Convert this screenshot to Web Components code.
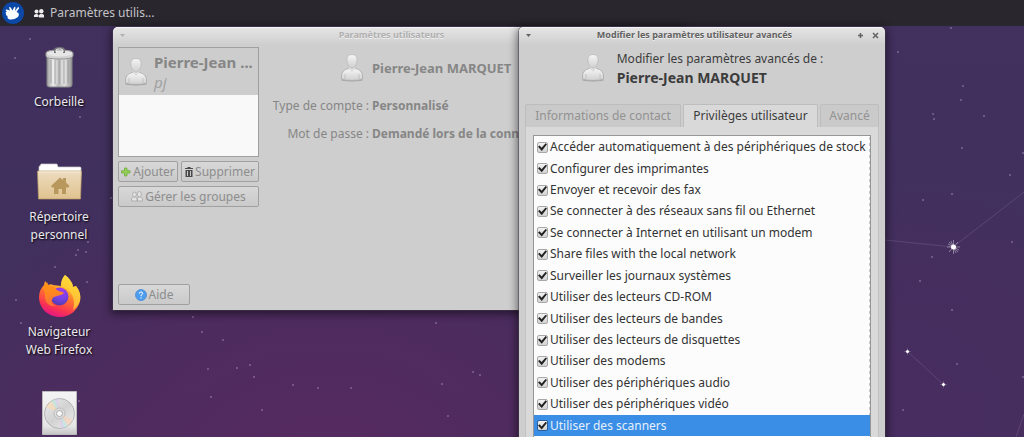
<!DOCTYPE html>
<html lang="fr">
<head>
<meta charset="utf-8">
<meta name="viewport" content="width=device-width, initial-scale=1">
<title>Paramètres utilisateurs</title>
<style>
  html, body { height: 100%; }
  body {
    margin: 0;
    overflow: hidden;
    font-family: "Noto Sans", "Open Sans", sans-serif;
    font-size: 12px;
    line-height: 18px;
    color: #3c3c3c;
  }
</style>
</head>
<body>
<desk-top>
  <top-panel slot="panel">Paramètres utilis...</top-panel>
  <desk-icon name="trash">Corbeille</desk-icon>
  <desk-icon name="home">Répertoire personnel</desk-icon>
  <desk-icon name="firefox">Navigateur Web Firefox</desk-icon>
  <desk-icon name="disc"></desk-icon>

  <app-window slot="windows" class="users" label="Paramètres utilisateurs" inactive>
    <users-settings></users-settings>
  </app-window>
  <app-window slot="windows" class="advanced" label="Modifier les paramètres utilisateur avancés">
    <advanced-settings></advanced-settings>
  </app-window>
</desk-top>

<script>
const icons = {
  trash: `<svg width="48" height="48" viewBox="0 0 48 48">
    <defs><linearGradient id="t"><stop offset="0" stop-color="#9d9d9d"/><stop offset=".25" stop-color="#ededed"/><stop offset=".45" stop-color="#b9b9b9"/><stop offset=".7" stop-color="#dedede"/><stop offset="1" stop-color="#959595"/></linearGradient></defs>
    <path d="M12 12h25v30q0 2-3 2H15q-3 0-3-2z" fill="url(#t)" stroke="#888"/>
    <path d="M16 17v23M20 17v24M24.500 17v24M29 17v24M33 17v23" stroke="#888" stroke-opacity=".4" stroke-width="1.500"/>
    <path d="M18 17v23M22 17v24M27 17v24M31 17v24" stroke="#fff" stroke-opacity=".4"/>
    <path d="M11 10q0-3 13.500-3T38 10v3q0 3-13.500 3T11 13z" fill="#d2d2d2" stroke="#959595"/>
    <ellipse cx="24.500" cy="10.500" rx="12.500" ry="3" fill="#e6e6e6"/>
    <path d="M20 10V7q0-2 4.500-2T29 7v3" fill="none" stroke="#777" stroke-width="2"/>
    <path d="M21 9V7q0-1 3.500-1T28 7v2" fill="none" stroke="#f4f4f4"/></svg>`,
  home: `<svg width="48" height="48" viewBox="0 0 48 48">
    <defs><linearGradient id="h" x2="0" y2="1"><stop stop-color="#eddcc0"/><stop offset="1" stop-color="#e0c28e"/></linearGradient></defs>
    <path d="M4 18V9q0-1 1-1l1-2h16l1 3h22q1 0 1 1v8z" fill="#fff" stroke="#ccc" stroke-width=".7"/>
    <path d="M2.500 13h44L45.500 41h-42z" fill="url(#h)" stroke="#b89864" stroke-opacity=".7"/>
    <path d="M3.500 14h42" stroke="#f8eedc"/>
    <path d="M25 19.500L16 28l1 1.500h2V36h4.500v-5h3.500v5h4v-6.500h2.500L34.500 28 31 24.500V20h-3v2z" fill="#b8985c"/></svg>`,
  firefox: `<svg width="48" height="48" viewBox="0 0 48 48">
    <defs>
      <linearGradient id="f" x1=".75" x2=".35" y2="1"><stop stop-color="#fff44f"/><stop offset=".28" stop-color="#ffb82b"/><stop offset=".55" stop-color="#ff6c32"/><stop offset=".8" stop-color="#fb3352"/><stop offset="1" stop-color="#e31587"/></linearGradient>
      <radialGradient id="p" cx=".6" cy=".2" r=".9"><stop stop-color="#a33bec"/><stop offset=".5" stop-color="#7542e5"/><stop offset="1" stop-color="#4b3a9d"/></radialGradient>
      <linearGradient id="y" x2="0" y2="1"><stop stop-color="#ff980e"/><stop offset="1" stop-color="#ff7139"/></linearGradient>
    </defs>
    <path d="M30 2c4 3 8 8 8 12l3-1c4 5 5 10 4 15-2 9-10 16-20 16C13 44 4 35 4 24c0-5 2-9 5-12l1-4 3 4c2-1 4-1 5 0l8 1c0-4 1-8 4-11z" fill="url(#f)"/>
    <circle cx="24.500" cy="23.500" r="9" fill="url(#p)"/>
    <path d="M8 15l4-6 2 5c3-1 5-1 7 2 2 3 6 2 8 4-2 2-5 2-7 3-1 1-3 0-4 2-3 3-1 7 3 8-6 1-11-3-11-9 0-3 0-6-2-9z" fill="url(#y)"/>
    <path d="M30 2c4 3 8 8 8 12l3-1c4 5 5 10 4 15-2 5-4 7-7 9 2-7 1-14-4-19-3-3-7-4-8-5 0-4 1-8 4-11z" fill="#ffd43a" fill-opacity=".75"/></svg>`,
  disc: `<svg width="48" height="48" viewBox="0 0 48 48">
    <defs>
      <linearGradient id="c" x2="0" y2="1"><stop stop-color="#f4f4f4"/><stop offset=".8" stop-color="#e6e6e6"/><stop offset="1" stop-color="#c4c4c4"/></linearGradient>
      <linearGradient id="r" y2="1"><stop stop-color="#ececec"/><stop offset=".5" stop-color="#d2d2d2"/><stop offset="1" stop-color="#eee"/></linearGradient>
    </defs>
    <path d="M7.500 3.500h34v43h-34z" fill="url(#c)" stroke="#bbb"/>
    <circle cx="24.500" cy="25.500" r="15" fill="url(#r)" stroke="#b5b5b5"/>
    <g fill-opacity=".55">
      <path d="M24.500 25.500L11 19l5-6z" fill="#ffd9a8"/><path d="M24.500 25.500L16 13l4-2z" fill="#b8e8d8"/><path d="M24.500 25.500L20 11l3-.5z" fill="#dcc4f4"/>
      <path d="M24.500 25.500L38 32l-5 6z" fill="#ffd0b0"/><path d="M24.500 25.500L33 38l-4 2z" fill="#b8e8e0"/><path d="M24.500 25.500L29 40l-3 .5z" fill="#dcc4f4"/>
    </g>
    <circle cx="24.500" cy="25.500" r="5.500" fill="#ddd" stroke="#b5b5b5" stroke-width=".8"/><circle cx="24.500" cy="25.500" r="3" fill="#f8f8f8" stroke="#aaa"/></svg>`,
  face: `<svg width="24" height="30" viewBox="0 0 24 30">
    <defs><linearGradient id="b" x2="0" y2="1"><stop stop-color="#f6f6f6"/><stop offset="1" stop-color="#cfcfcf"/></linearGradient></defs>
    <ellipse cx="12" cy="27" rx="11" ry="1.500" fill="#777" fill-opacity=".5"/>
    <path d="M1.500 23q0-6 7-7.500h7q7 1.500 7 7.500v3q-3 1.500-10.500 1.500T1.500 26z" fill="url(#b)" stroke="#a8a8a8" stroke-width=".8"/>
    <path d="M5 21v5M19 21v5" stroke="#bdbdbd" stroke-width=".8"/>
    <path d="M9 13v3l3 3 3-3v-3z" fill="#dedede"/>
    <path d="M12 1.500c-4 0-5.500 3-5 6.500s2 7 5 7 4.500-3.500 5-7-1-6.500-5-6.500z" fill="url(#b)" stroke="#bababa" stroke-width=".8"/></svg>`,
  add: `<svg width="10" height="10" viewBox="0 0 10 10"><path d="M3.500 1h2.500v2.700h3V6H6v3H3.500V6h-3V3.700h3z" fill="#96cf58" stroke="#6fae3c" stroke-width=".8"/></svg>`,
  del: `<svg width="8" height="10" viewBox="0 0 8 10"><path d="M0 2V1h2.500V0h3v1H8v1zM.5 3h7v7h-7z" fill="#4a4a4a"/><path d="M2.500 4v5M5.500 4v5" stroke="#c8c8c8"/></svg>`,
  group: `<svg width="12" height="11" viewBox="0 0 12 11"><g fill="#e4e4e4" stroke="#a4a4a4" stroke-width=".8"><path d="M.5 10V7.500L2.500 6h2l2 1.500V10zM6 10V7.500L7.500 6h2l2 1.500V10z"/><ellipse cx="3.500" cy="3.500" rx="1.800" ry="2.500"/><ellipse cx="8.300" cy="3.200" rx="2" ry="2.700"/></g></svg>`,
  help: `<svg width="12" height="12" viewBox="0 0 12 12"><circle cx="6" cy="6" r="5.500" fill="#4c9df0" stroke="#4a8ad2" stroke-width=".8"/><path d="M4.300 4.600Q4.300 3 6 3t1.700 1.500Q7.700 5.500 6 6.200v1M6 8.300v1.200" fill="none" stroke="#fff"/></svg>`
};

class DeskTop extends HTMLElement {
  connectedCallback() {
    this.attachShadow({ mode: 'open' });
    // small stars of the wallpaper, x and y
    const stars = [
      [29, 39], [14, 58], [79, 117], [110, 198], [77, 250], [75, 255], [85, 252], [87, 242], [54, 267], [86, 282], [15, 300], [20, 323], [78, 401],
      [192, 317], [201, 332], [222, 340], [207, 369], [236, 368], [249, 365], [253, 377], [292, 385], [317, 388], [350, 388], [210, 397], [261, 410],
      [435, 323], [472, 372], [479, 375], [441, 384], [447, 416],
      [950, 28], [897, 52], [962, 86], [960, 100], [932, 114], [933, 119], [983, 116], [961, 148], [1022, 153], [1009, 175], [951, 194], [922, 200],
      [1011, 242], [931, 257], [919, 281], [951, 310], [956, 364], [1022, 377], [902, 410]
    ];
    this.shadowRoot.innerHTML = `
      <style>
        :host {
          display: block;
          position: relative;
          height: 100vh;
          overflow: hidden;
          background:
            radial-gradient(ellipse 420px 330px at 32% 110%, #572a60 0%, rgba(80, 42, 94, 0.7) 60%, rgba(76, 44, 94, 0) 100%),
            radial-gradient(ellipse 300px 280px at 88% 95%, #482d60 0%, rgba(72, 45, 96, 0) 100%),
            linear-gradient(180deg, #42305e 0%, #40305e 40%, #452f5e 100%);
        }
        .sky {
          position: absolute;
          top: 0;
          left: 0;
        }
        .icons {
          position: relative;
          display: grid;
          grid-auto-rows: 115px;
          width: 118px;
          padding-top: 17px;
        }
        ::slotted(app-window) { position: absolute; }
        ::slotted(.users) { left: 113px; top: 27px; width: 572px; min-height: 283px; }
        ::slotted(.advanced) { left: 519px; top: 27px; width: 366px; bottom: -20px; }
      </style>
      <svg class="sky" width="1024" height="437" aria-hidden="true">
        <g fill="#b9a6cc" fill-opacity=".35">${stars.map(s => `<rect x="${s[0]}" y="${s[1] - 1}" width="2" height="2"/>`).join('')}</g>
        <path d="M885 240L953 247 1024 192M907 351L943 384M1016 437L1024 414" fill="none" stroke="#8a6f99" stroke-opacity=".35"/>
        <g stroke="#fff" stroke-opacity=".55" stroke-width=".7"><path d="M947 247h13M953.500 240v14M949 242l9 10M958 242l-9 10M948 244l11 6M951 241l5 12"/></g>
        <circle cx="953.500" cy="247" r="2.500" fill="#fff"/>
        <g fill="#fff"><circle cx="907.500" cy="351.500" r="1.500"/><circle cx="943.500" cy="384.500" r="1.500"/></g>
        <path d="M904.500 351.500h6M907.500 348.500v6M940.500 384.500h6M943.500 381.500v6" stroke="#fff" stroke-opacity=".3"/>
      </svg>
      <slot name="panel"></slot>
      <div class="icons"><slot></slot></div>
      <slot name="windows"></slot>
    `;
  }
}

class TopPanel extends HTMLElement {
  connectedCallback() {
    this.attachShadow({ mode: 'open' });
    this.shadowRoot.innerHTML = `
      <style>
        :host {
          display: flex;
          position: relative;
          align-items: center;
          gap: 10px;
          height: 26px;
          padding: 0 2px;
          background: #29262e;
          color: #c4c3c6;
        }
        button {
          display: flex;
          align-items: center;
          gap: 6px;
          padding: 0;
          border: 0;
          background: none;
          color: inherit;
          font: inherit;
        }
      </style>
      <button aria-label="Menu">
        <svg width="22" height="22" viewBox="0 0 22 22">
          <circle cx="11" cy="11" r="11" fill="#0b48a8"/>
          <path d="M4 12Q3 9.500 5 9.500L3.500 8.500Q4 7 6.500 8L8 8.500 7 5.500Q8 4.500 9 6l1.500 2.500L12 5.500q1-1.500 1.500 0l-.5 3.500 3-4q1.500 0 1 1.500L14.500 10l2 1q1 2-.5 4-4 3-8 2.500Q5 17 5.500 14q-2-.5-1.500-2z" fill="#fff"/>
        </svg>
      </button>
      <button>
        <svg width="10" height="9" viewBox="0 0 10 9"><g fill="#ececec"><circle cx="2.500" cy="2.500" r="2"/><circle cx="7.300" cy="2.300" r="2.200"/><path d="M0 8V6l2-1h1l1.500 1v2zM5 8.500V6l1.500-1h2L10 6v2.500z"/></g></svg>
        <slot></slot>
      </button>
    `;
  }
}

class DeskIcon extends HTMLElement {
  connectedCallback() {
    this.attachShadow({ mode: 'open' });
    this.shadowRoot.innerHTML = `
      <style>
        :host {
          display: flex;
          flex-direction: column;
          align-items: center;
          gap: 2px;
          color: #ebe9ee;
          text-align: center;
          text-shadow: 1px 1px 2px #000;
        }
        svg { display: block; }
        span { width: 74px; }
      </style>
      ${icons[this.getAttribute('name')]}
      <span><slot></slot></span>
    `;
  }
}

class AppWindow extends HTMLElement {
  connectedCallback() {
    this.attachShadow({ mode: 'open' });
    this.shadowRoot.innerHTML = `
      <style>
        :host {
          display: flex;
          flex-direction: column;
          box-sizing: border-box;
          border-radius: 5px 5px 0 0;
          background: linear-gradient(180deg, #e6e6e6 0, #cecece 18px);
          box-shadow: inset 0 1px #f4f4f4, 0 0 0 1px rgba(70, 60, 80, 0.5), 0 2px 9px 2px rgba(0, 0, 0, 0.5);
        }
        header {
          display: flex;
          align-items: center;
          gap: 8px;
          height: 16px;
          padding: 0 6px;
          font-size: 9px;
          font-weight: bold;
          line-height: 16px;
          color: #626262;
          text-shadow: 0 1px #f0f0f0;
        }
        :host([inactive]) header { color: #b0b0b0; }
        .title { flex: 1; text-align: center; }
        button {
          display: flex;
          padding: 0;
          border: 0;
          background: none;
          color: inherit;
        }
        main { flex: 1; display: flex; }
        ::slotted(*) { flex: 1; min-width: 0; }
      </style>
      <header>
        <button aria-label="Menu de la fenêtre"><svg width="7" height="5"><path d="M1 1h5L3.500 4z" fill="currentColor"/></svg></button>
        <span class="title">${this.getAttribute('label')}</span>
        <button aria-label="Maximiser"><svg width="7" height="7"><path d="M3.500 1v5M1 3.500h5" stroke="currentColor" stroke-width="1.500"/></svg></button>
        <button aria-label="Fermer"><svg width="7" height="7"><path d="M1 1l5 5M6 1L1 6" stroke="currentColor" stroke-width="1.500"/></svg></button>
      </header>
      <main><slot></slot></main>
    `;
  }
}

class ToolButton extends HTMLElement {
  connectedCallback() {
    this.attachShadow({ mode: 'open' });
    this.shadowRoot.innerHTML = `
      <style>
        :host { display: flex; }
        button {
          flex: 1;
          display: flex;
          align-items: center;
          justify-content: center;
          gap: 2px;
          height: 21px;
          padding: 0 2px;
          border: 1px solid #a0a0a0;
          border-radius: 2px;
          background: linear-gradient(180deg, #d8d8d8, #cacaca);
          color: #8d8d8d;
          font: inherit;
          white-space: nowrap;
        }
      </style>
      <button>${icons[this.getAttribute('icon')]}<slot></slot></button>
    `;
  }
}

class UsersSettings extends HTMLElement {
  connectedCallback() {
    this.attachShadow({ mode: 'open' });
    this.shadowRoot.innerHTML = `
      <style>
        :host {
          display: flex;
          gap: 11px;
          padding: 4px 5px 5px;
          color: #868686;
        }
        aside {
          display: flex;
          flex-direction: column;
          width: 141px;
          gap: 4px;
        }
        .list {
          height: 108px;
          border: 1px solid #a0a0a0;
          background: #f9f9f9;
        }
        .user {
          display: flex;
          align-items: center;
          gap: 6px;
          height: 47px;
          padding: 0 5px;
          background: #cdcdcd;
          line-height: 20px;
          font-size: 15px;
          white-space: nowrap;
        }
        .user i { display: block; color: #a2a2a2; }
        .row { display: grid; grid-template-columns: 60px 1fr; gap: 3px; }
        .help { width: 72px; margin-top: auto; }
        section { flex: 1; }
        .head {
          display: flex;
          align-items: center;
          gap: 8px;
          height: 41px;
          padding-left: 70px;
          font-size: 13px;
        }
        .head svg, .user svg { flex: none; }
        dl {
          display: grid;
          grid-template-columns: 99px 1fr;
          grid-auto-rows: 28px;
          align-items: center;
          column-gap: 3px;
          margin: 4px 0 0;
          white-space: nowrap;
        }
        dt { text-align: right; }
        dd { margin: 0; font-weight: bold; }
      </style>
      <aside>
        <div class="list"><div class="user">${icons.face}<div><b>Pierre-Jean ...</b><i>pj</i></div></div></div>
        <div class="row">
          <tool-button icon="add">Ajouter</tool-button>
          <tool-button icon="del">Supprimer</tool-button>
        </div>
        <tool-button icon="group">Gérer les groupes</tool-button>
        <tool-button class="help" icon="help">Aide</tool-button>
      </aside>
      <section>
        <div class="head">${icons.face}<b>Pierre-Jean MARQUET</b></div>
        <dl>
          <dt>Type de compte :</dt><dd>Personnalisé</dd>
          <dt>Mot de passe :</dt><dd>Demandé lors de la connexion</dd>
        </dl>
      </section>
    `;
  }
}

class PrivilegeRow extends HTMLElement {
  connectedCallback() {
    this.attachShadow({ mode: 'open' });
    this.shadowRoot.innerHTML = `
      <style>
        :host { display: flex; overflow: hidden; }
        :host([selected]) { background: #3a8ee6; color: #e6f0fb; }
        label {
          display: flex;
          align-items: center;
          gap: 2px;
          padding: 1px 0 0 3px;
          white-space: nowrap;
        }
        input {
          flex: none;
          display: grid;
          place-items: center;
          appearance: none;
          width: 11px;
          height: 11px;
          margin: 0;
          border: 1px solid #a8a8a8;
          border-radius: 2px;
          background: linear-gradient(180deg, #f2f2f2, #d2d2d2);
        }
        :host([selected]) input { border-color: #2a5f9c; }
        input:checked::before {
          content: '';
          width: 9px;
          height: 8px;
          background: #222;
          clip-path: polygon(0 45%, 18% 30%, 40% 58%, 85% 0, 100% 14%, 42% 96%);
        }
      </style>
      <label><input type="checkbox" checked><slot></slot></label>
    `;
  }
}

class AdvancedSettings extends HTMLElement {
  connectedCallback() {
    this.attachShadow({ mode: 'open' });
    this.shadowRoot.innerHTML = `
      <style>
        :host {
          display: flex;
          flex-direction: column;
          padding: 4px 6px 0;
        }
        .head {
          display: flex;
          align-items: center;
          justify-content: center;
          gap: 12px;
          height: 42px;
          line-height: 19px;
        }
        .head b { display: block; font-size: 14px; }
        .tabs {
          display: grid;
          grid-template-columns: 156px 1fr 59px;
          gap: 2px;
          margin-top: 15px;
        }
        .tabs button {
          height: 23px;
          padding: 0 0 1px;
          border: 1px solid #bdbdbd;
          border-bottom: 0;
          border-radius: 2px 2px 0 0;
          background: #cacaca;
          color: #929292;
          font: inherit;
          white-space: nowrap;
        }
        .tabs [aria-selected=true] {
          background: #d9d9d9;
          color: #3c3c3c;
        }
        .page {
          flex: 1;
          padding: 8px 7px 0;
          border: 1px solid #c2c2c2;
          border-top: 0;
          background: #d9d9d9;
        }
        .list {
          display: grid;
          grid-template-rows: repeat(14, 1fr);
          height: 300px;
          padding-bottom: 20px;
          border: 1px solid #979797;
          background: linear-gradient(#c8c8c8 50%, transparent 0) right / 1px 6px repeat-y #fcfcfc;
          color: #333;
        }
      </style>
      <div class="head">${icons.face}<div>Modifier les paramètres avancés de :<b>Pierre-Jean MARQUET</b></div></div>
      <div class="tabs" role="tablist">
        <button role="tab">Informations de contact</button>
        <button role="tab" aria-selected="true">Privilèges utilisateur</button>
        <button role="tab">Avancé</button>
      </div>
      <div class="page">
        <div class="list">
          <privilege-row>Accéder automatiquement à des périphériques de stock</privilege-row>
          <privilege-row>Configurer des imprimantes</privilege-row>
          <privilege-row>Envoyer et recevoir des fax</privilege-row>
          <privilege-row>Se connecter à des réseaux sans fil ou Ethernet</privilege-row>
          <privilege-row>Se connecter à Internet en utilisant un modem</privilege-row>
          <privilege-row>Share files with the local network</privilege-row>
          <privilege-row>Surveiller les journaux systèmes</privilege-row>
          <privilege-row>Utiliser des lecteurs CD-ROM</privilege-row>
          <privilege-row>Utiliser des lecteurs de bandes</privilege-row>
          <privilege-row>Utiliser des lecteurs de disquettes</privilege-row>
          <privilege-row>Utiliser des modems</privilege-row>
          <privilege-row>Utiliser des périphériques audio</privilege-row>
          <privilege-row>Utiliser des périphériques vidéo</privilege-row>
          <privilege-row selected>Utiliser des scanners</privilege-row>
        </div>
      </div>
    `;
  }
}

customElements.define('desk-top', DeskTop);
customElements.define('top-panel', TopPanel);
customElements.define('desk-icon', DeskIcon);
customElements.define('app-window', AppWindow);
customElements.define('tool-button', ToolButton);
customElements.define('users-settings', UsersSettings);
customElements.define('privilege-row', PrivilegeRow);
customElements.define('advanced-settings', AdvancedSettings);
</script>
</body>
</html>
